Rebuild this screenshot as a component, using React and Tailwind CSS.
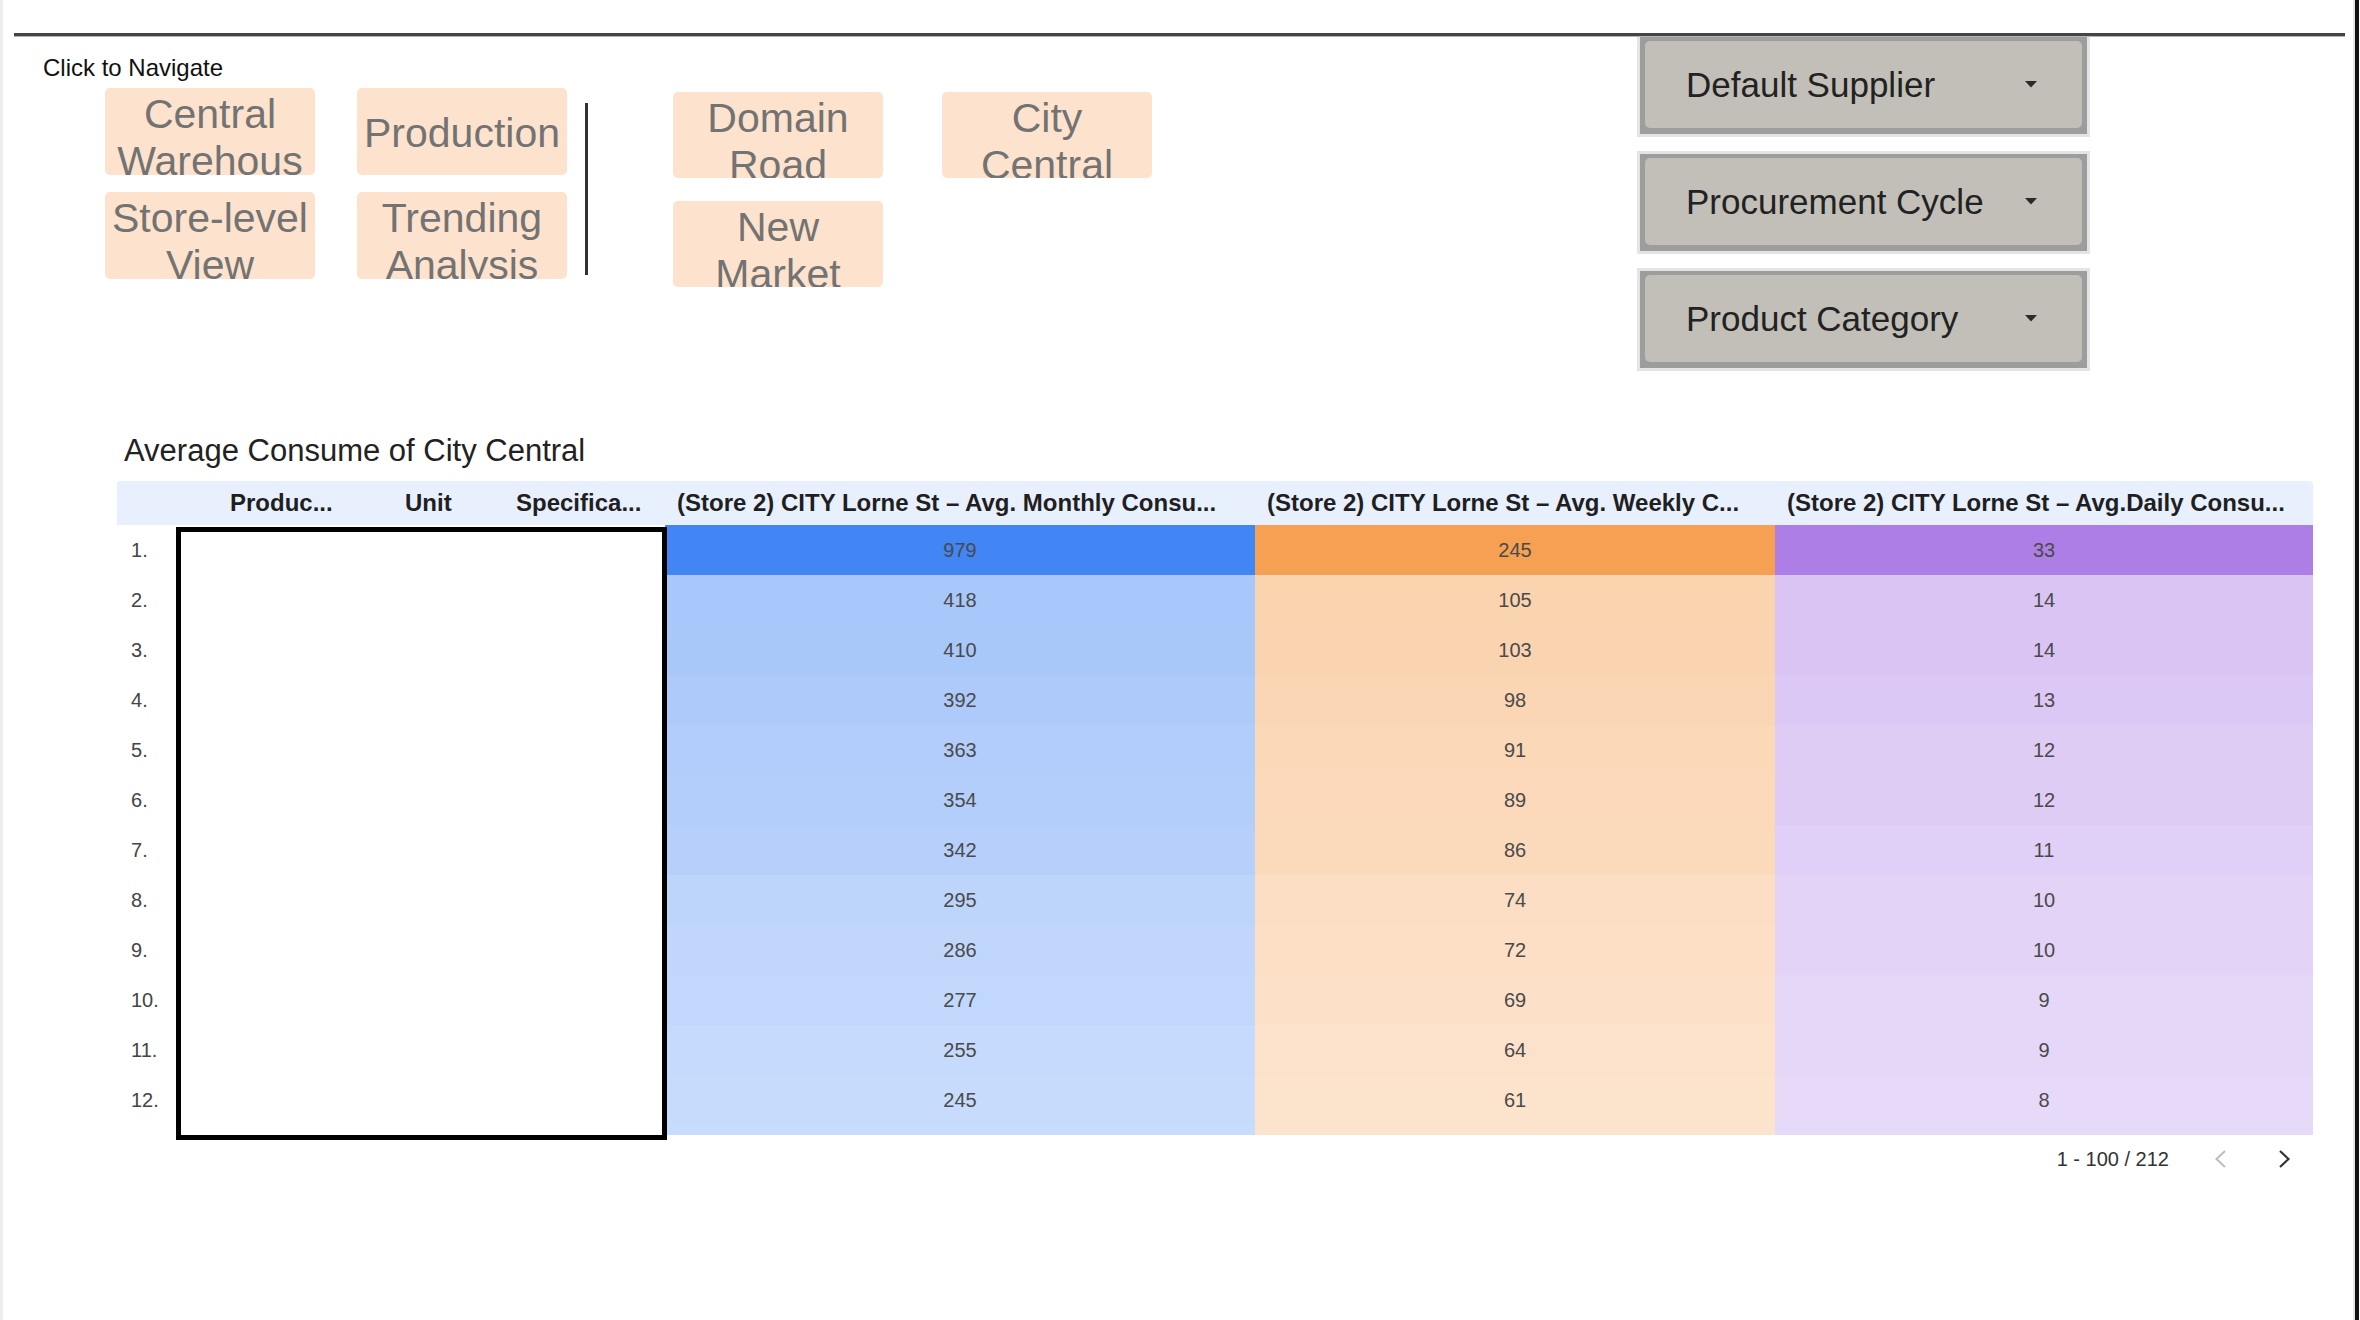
import React from 'react';

const BLUE = [66, 133, 244];
const ORANGE = [245, 160, 82];
const PURPLE = [173, 127, 230];

const rows = [
  [979, 245, 33],
  [418, 105, 14],
  [410, 103, 14],
  [392, 98, 13],
  [363, 91, 12],
  [354, 89, 12],
  [342, 86, 11],
  [295, 74, 10],
  [286, 72, 10],
  [277, 69, 9],
  [255, 64, 9],
  [245, 61, 8],
  [240, 60, 8],
];

const maxes = [979, 245, 33];
const palette = [BLUE, ORANGE, PURPLE];

// white -> full colour, scaled by value / column max (with a small floor)
const tint = (rgb, ratio) => {
  const t = 0.06 + 0.94 * ratio;
  return `rgb(${rgb.map((c) => Math.round(255 - (255 - c) * t)).join(',')})`;
};

const columns = [
  { w: 'w-[101px]', label: '' },
  { w: 'w-[175px]', label: 'Produc...' },
  { w: 'w-[111px]', label: 'Unit' },
  { w: 'w-[161px]', label: 'Specifica...' },
  { w: 'w-[590px]', label: '(Store 2) CITY Lorne St – Avg. Monthly Consu...' },
  { w: 'w-[520px]', label: '(Store 2) CITY Lorne St – Avg. Weekly C...' },
  { w: 'w-[538px]', label: '(Store 2) CITY Lorne St – Avg.Daily Consu...' },
];

const valueWidths = ['w-[590px]', 'w-[520px]', 'w-[538px]'];

const NavButton = ({ label, h = 'h-[87px]' }) => (
  <div
    className={`w-[210px] ${h} flex flex-col [justify-content:safe_center] overflow-hidden rounded-[5px] bg-[#fde3cd] px-[6px] pt-[3px]`}
  >
    <p className="break-words text-center text-[41px] leading-[47px] text-[#737373]">{label}</p>
  </div>
);

const Dropdown = ({ label }) => (
  <div className="bg-[#e4e4e4] p-[3px]">
    <div className="bg-[#9d9d9d] px-[5px] pt-[4px] pb-[6px]">
      <div className="flex h-[87px] items-center justify-between rounded-[5px] bg-[#c1bfb8] pl-[41px] pr-[45px]">
        <span className="text-[35px] leading-none text-[#222]">{label}</span>
        <svg width="12" height="7" viewBox="0 0 12 7">
          <path d="M0 0 L12 0 L6 6.5 Z" fill="#2a2a2a" />
        </svg>
      </div>
    </div>
  </div>
);

export default function App() {
  return (
    <div className="flex h-[1320px] w-[2360px] bg-white font-['Liberation_Sans',Arial,sans-serif] text-[#222]">
      <div className="w-[3px] shrink-0 bg-[#ececec]" />

      <main className="flex w-[2350px] shrink-0 flex-col">
        {/* top rule */}
        <div className="relative z-10 ml-[11px] mt-[33px] h-[4px] w-[2331px] border-b border-[#b5b5b5] bg-[#444]" />

        {/* navigation + filters */}
        <section className="flex h-[397px] items-start">
          <div className="pl-[40px] pt-[17px]">
            <p className="text-[24px] leading-[28px] text-[#111]">Click to Navigate</p>
            <div className="ml-[62px] mt-[6px] flex items-start">
              <div className="grid grid-cols-[210px_210px] gap-x-[42px] gap-y-[17px]">
                <NavButton label="Central Warehouse" />
                <NavButton label="Production" />
                <NavButton label="Store-level View" />
                <NavButton label="Trending Analysis" />
              </div>
              <div className="ml-[18px] mt-[15px] h-[172px] w-[3px] bg-[#333]" />
              <div className="ml-[85px] mt-[4px] flex flex-col gap-[23px]">
                <NavButton label="Domain Road" h="h-[86px]" />
                <NavButton label="New Market" h="h-[86px]" />
              </div>
              <div className="ml-[59px] mt-[4px]">
                <NavButton label="City Central" h="h-[86px]" />
              </div>
            </div>
          </div>

          <div className="-mt-[3px] ml-auto mr-[263px] flex w-[453px] flex-col gap-[14px]">
            <Dropdown label="Default Supplier" />
            <Dropdown label="Procurement Cycle" />
            <Dropdown label="Product Category" />
          </div>
        </section>

        {/* table */}
        <h2 className="ml-[121px] text-[31px] leading-[34px] text-[#222]">Average Consume of City Central</h2>

        <div className="relative ml-[114px] mt-[13px] w-[2196px]">
          <div className="flex h-[44px] items-center rounded-t-[4px] bg-[#e8f0fe] text-[24px] font-bold text-[#1f1f1f]">
            {columns.map((c, i) => (
              <div key={i} className={`${c.w} shrink-0 overflow-hidden whitespace-nowrap pl-[12px]`}>
                {c.label}
              </div>
            ))}
          </div>

          <div className="h-[610px] overflow-hidden">
            {rows.map((r, i) => (
              <div key={i} className="flex h-[50px] items-center text-[20px]">
                <div className="w-[101px] shrink-0 pl-[14px] text-[#444]">{i + 1}.</div>
                <div className="h-full w-[447px] shrink-0 bg-white" />
                {r.map((v, j) => (
                  <div
                    key={j}
                    className={`${valueWidths[j]} flex h-full shrink-0 items-center justify-center text-[#4a4a4a]`}
                    style={{ backgroundColor: tint(palette[j], v / maxes[j]) }}
                  >
                    {v}
                  </div>
                ))}
              </div>
            ))}
          </div>

          {/* redaction box over product columns */}
          <div className="absolute left-[59px] top-[46px] h-[613px] w-[491px] border-[5px] border-black bg-white" />

          <div className="flex h-[48px] items-center justify-end pr-[22px] text-[20px] text-[#333]">
            <span>1 - 100 / 212</span>
            <svg className="ml-[45px]" width="13" height="20" viewBox="0 0 13 20">
              <polyline points="11,2 2.5,10 11,18" fill="none" stroke="#bdbdbd" strokeWidth="2" />
            </svg>
            <svg className="ml-[51px]" width="13" height="20" viewBox="0 0 13 20">
              <polyline points="2,2 10.5,10 2,18" fill="none" stroke="#333" strokeWidth="2.2" />
            </svg>
          </div>
        </div>
      </main>

      <div className="w-[2px] shrink-0 bg-[#e3e3e3]" />
      <div className="w-[4px] shrink-0 bg-[#111]" />
      <div className="w-[1px] shrink-0" />
    </div>
  );
}
